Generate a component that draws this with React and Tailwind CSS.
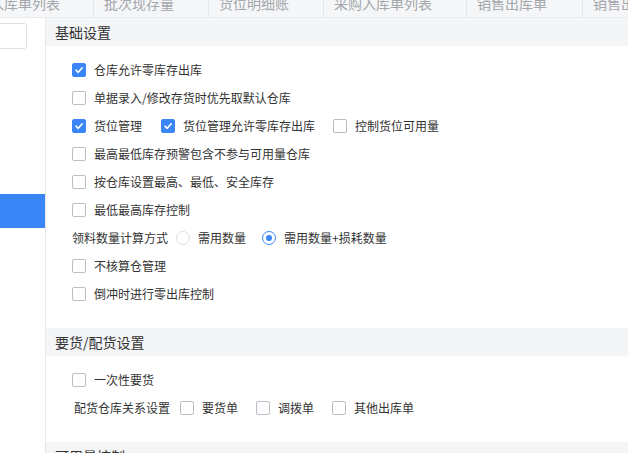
import React from 'react';

const Checkbox = ({ checked }) => (
  <span
    className={`inline-flex h-[14px] w-[14px] shrink-0 items-center justify-center rounded-[2px] border ${
      checked ? 'border-[#3a86f6] bg-[#3a86f6]' : 'border-[#b9bdc5] bg-white'
    }`}
  >
    {checked && (
      <svg width="10" height="10" viewBox="0 0 10 10" fill="none">
        <path d="M2 5.2 L4.2 7.3 L8.2 2.8" stroke="white" strokeWidth="1.6" strokeLinecap="round" strokeLinejoin="round" />
      </svg>
    )}
  </span>
);

const Radio = ({ checked }) => (
  <span
    className={`inline-flex h-[14px] w-[14px] shrink-0 items-center justify-center rounded-full border ${
      checked ? 'border-[#3a86f6]' : 'border-[#dcdfe6]'
    }`}
  >
    {checked && <span className="h-[6px] w-[6px] rounded-full bg-[#3a86f6]" />}
  </span>
);

const Option = ({ checked, label, className = '' }) => (
  <label className={`flex items-center gap-[8px] ${className}`}>
    <Checkbox checked={checked} />
    <span>{label}</span>
  </label>
);

const Row = ({ children }) => <div className="flex h-[28px] items-center">{children}</div>;

const SectionHeader = ({ title }) => (
  <div className="flex h-[28px] items-center bg-[#f4f5f7] pl-[9px] text-[14px] text-[#333]">{title}</div>
);

// tab strip is scrolled, so the first and last tabs are partly hidden
const tabs = [
  { title: '入库单列表', cls: 'w-[94px] justify-end pr-[33px]' },
  { title: '批次现存量', cls: 'w-[115px] pl-[10px]' },
  { title: '货位明细账', cls: 'w-[115px] pl-[10px]' },
  { title: '采购入库单列表', cls: 'w-[143px] pl-[10px]' },
  { title: '销售出库单', cls: 'w-[116px] pl-[10px]' },
  { title: '销售出库单列表', cls: 'w-[150px] pl-[10px]' },
];

export default function App() {
  return (
    <div
      className="flex h-[453px] w-[628px] flex-col overflow-hidden bg-white text-[12px] text-[#333]"
      style={{ fontFamily: '"Microsoft YaHei", "Noto Sans CJK SC", "Noto Sans", sans-serif' }}
    >
      <div className="flex h-[18px] shrink-0 items-start overflow-hidden border-b border-[#e8eaee] bg-[#f5f6f8]">
        {tabs.map((t) => (
          <div key={t.title} className={`flex h-[18px] shrink-0 items-start overflow-hidden border-r border-[#e3e5e9] ${t.cls}`}>
            <span className="-mt-[4px] whitespace-nowrap text-[14px] leading-[14px] text-[#a3a6ab]">{t.title}</span>
          </div>
        ))}
      </div>

      <div className="flex flex-1">
        {/* left sidebar */}
        <div className="w-[46px] shrink-0 border-r border-[#e6e8eb]">
          <div className="-ml-[4px] mt-[5px] h-[26px] w-[31px] rounded-r-[3px] border border-[#dcdfe6] bg-white" />
          <div className="mt-[145px] h-[34px] bg-[#3a86f6]" />
        </div>

        {/* main settings */}
        <div className="flex-1">
          <SectionHeader title="基础设置" />
          <div className="pb-[20px] pl-[26px] pt-[10px]">
            <Row>
              <Option checked label="仓库允许零库存出库" />
            </Row>
            <Row>
              <Option label="单据录入/修改存货时优先取默认仓库" />
            </Row>
            <Row>
              <Option checked label="货位管理" className="mr-[19px]" />
              <Option checked label="货位管理允许零库存出库" className="mr-[18px]" />
              <Option label="控制货位可用量" />
            </Row>
            <Row>
              <Option label="最高最低库存预警包含不参与可用量仓库" />
            </Row>
            <Row>
              <Option label="按仓库设置最高、最低、安全库存" />
            </Row>
            <Row>
              <Option label="最低最高库存控制" />
            </Row>
            <Row>
              <span className="mr-[8px]">领料数量计算方式</span>
              <label className="mr-[16px] flex items-center gap-[8px]">
                <Radio />
                <span>需用数量</span>
              </label>
              <label className="flex items-center gap-[8px]">
                <Radio checked />
                <span>需用数量+损耗数量</span>
              </label>
            </Row>
            <Row>
              <Option label="不核算仓管理" />
            </Row>
            <Row>
              <Option label="倒冲时进行零出库控制" />
            </Row>
          </div>

          <SectionHeader title="要货/配货设置" />
          <div className="pb-[20px] pl-[26px] pt-[10px]">
            <Row>
              <Option label="一次性要货" />
            </Row>
            <Row>
              <span className="ml-[2px] mr-[10px]">配货仓库关系设置</span>
              <Option label="要货单" className="mr-[18px]" />
              <Option label="调拨单" className="mr-[18px]" />
              <Option label="其他出库单" />
            </Row>
          </div>

          <SectionHeader title="可用量控制" />
        </div>
      </div>
    </div>
  );
}
